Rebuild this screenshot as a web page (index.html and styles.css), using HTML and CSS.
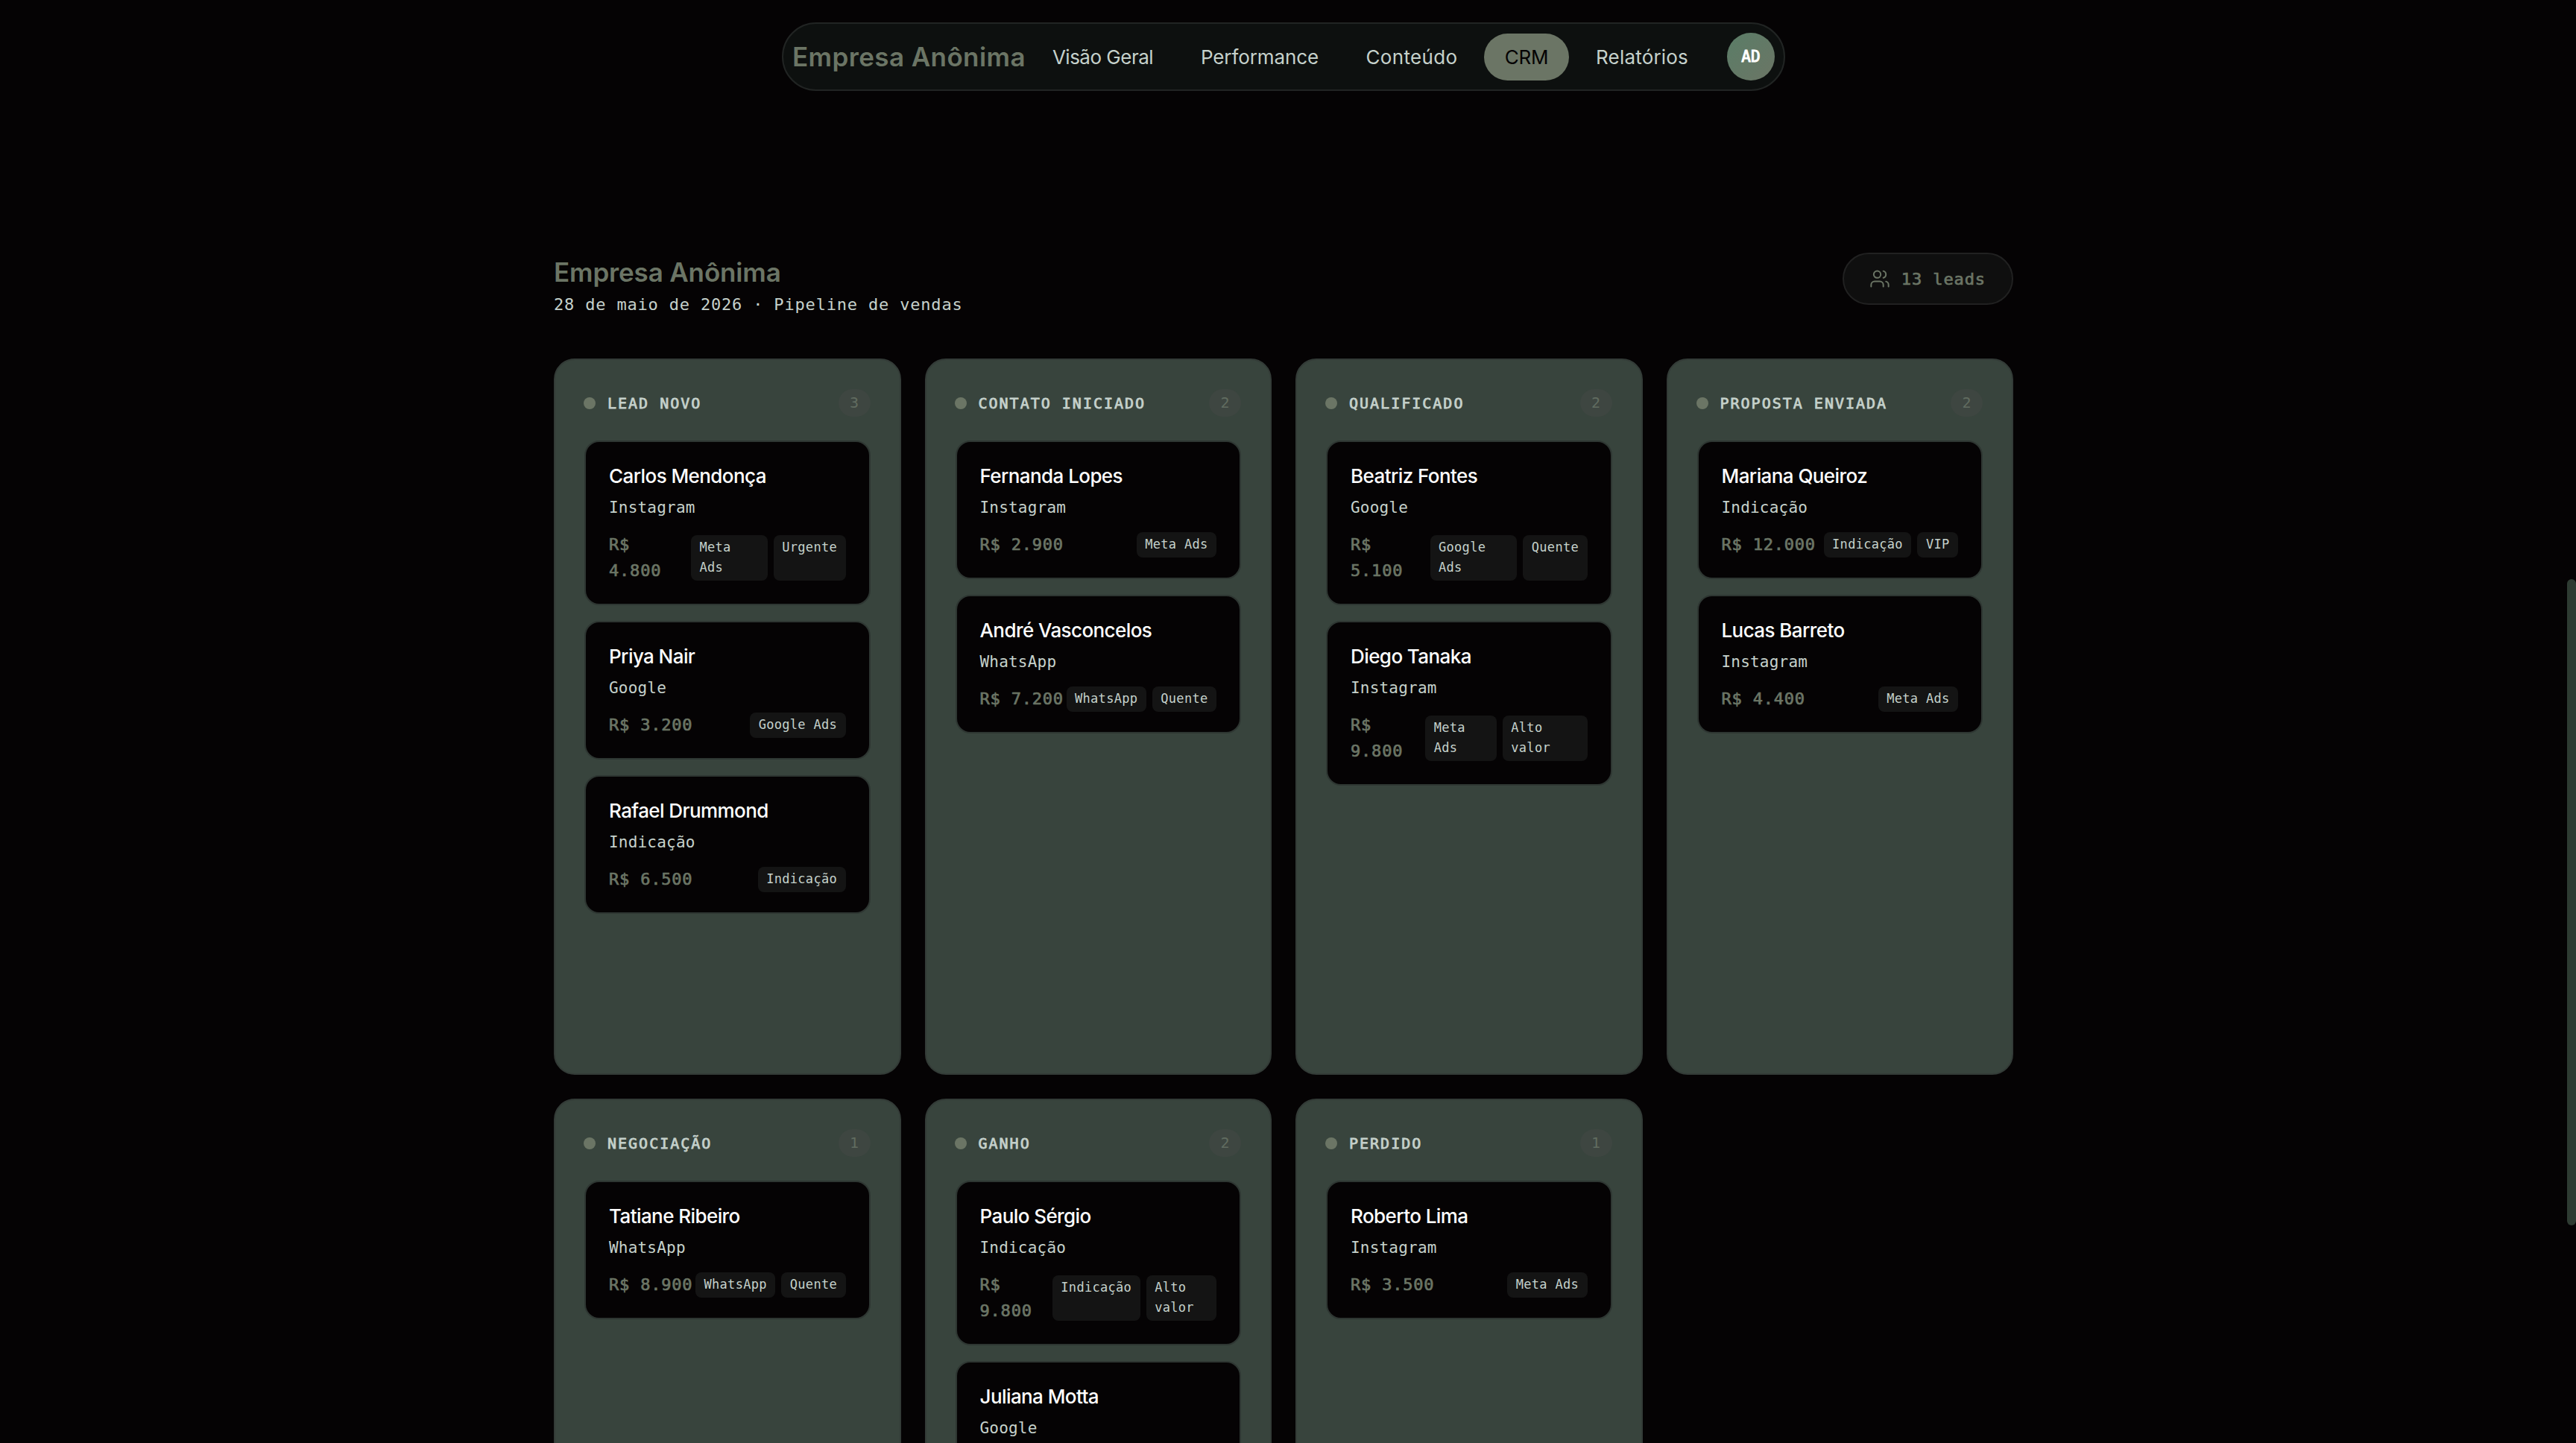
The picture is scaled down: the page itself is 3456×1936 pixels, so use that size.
FILE: index.html
```html
<!DOCTYPE html>
<html lang="pt-BR">
<head>
<meta charset="utf-8">
<title>CRM</title>
<link rel="stylesheet" href="styles.css">
</head>
<body>
<nav class="nav">
  <span class="brand"><span>Empresa Anônima</span></span>
  <a class="link w1">Visão Geral</a>
  <a class="link w2">Performance</a>
  <a class="link w3">Conteúdo</a>
  <a class="link w4 active">CRM</a>
  <a class="link w5">Relatórios</a>
  <span class="avatar">AD</span>
</nav>
<main class="page">
  <header class="head">
    <div>
      <h1 class="title">Empresa Anônima</h1>
      <p class="date">28 de maio de 2026 · Pipeline de vendas</p>
    </div>
    <div class="leads">
      <svg class="icon" viewBox="0 0 24 24" fill="none" stroke="currentColor" stroke-width="1.7" stroke-linecap="round" stroke-linejoin="round"><path d="M16 21v-2a4 4 0 0 0-4-4H6a4 4 0 0 0-4 4v2"/><circle cx="9" cy="7" r="4"/><path d="M22 21v-2a4 4 0 0 0-3-3.87"/><path d="M16 3.13a4 4 0 0 1 0 7.75"/></svg>
      <span>13 leads</span>
    </div>
  </header>
  <section class="board">
    <div class="column">
      <div class="colhead"><i class="dot"></i><h2>LEAD NOVO</h2><span class="count">3</span></div>
      <article class="card"><h3>Carlos Mendonça</h3><p>Instagram</p><div class="foot"><b>R$ 4.800</b><div class="tags"><span>Meta Ads</span><span>Urgente</span></div></div></article>
      <article class="card"><h3>Priya Nair</h3><p>Google</p><div class="foot"><b>R$ 3.200</b><div class="tags"><span>Google Ads</span></div></div></article>
      <article class="card"><h3>Rafael Drummond</h3><p>Indicação</p><div class="foot"><b>R$ 6.500</b><div class="tags"><span>Indicação</span></div></div></article>
    </div>
    <div class="column">
      <div class="colhead"><i class="dot"></i><h2>CONTATO INICIADO</h2><span class="count">2</span></div>
      <article class="card"><h3>Fernanda Lopes</h3><p>Instagram</p><div class="foot"><b>R$ 2.900</b><div class="tags"><span>Meta Ads</span></div></div></article>
      <article class="card"><h3>André Vasconcelos</h3><p>WhatsApp</p><div class="foot"><b>R$ 7.200</b><div class="tags"><span>WhatsApp</span><span>Quente</span></div></div></article>
    </div>
    <div class="column">
      <div class="colhead"><i class="dot"></i><h2>QUALIFICADO</h2><span class="count">2</span></div>
      <article class="card"><h3>Beatriz Fontes</h3><p>Google</p><div class="foot"><b>R$ 5.100</b><div class="tags"><span>Google Ads</span><span>Quente</span></div></div></article>
      <article class="card"><h3>Diego Tanaka</h3><p>Instagram</p><div class="foot"><b>R$ 9.800</b><div class="tags"><span>Meta Ads</span><span>Alto valor</span></div></div></article>
    </div>
    <div class="column">
      <div class="colhead"><i class="dot"></i><h2>PROPOSTA ENVIADA</h2><span class="count">2</span></div>
      <article class="card"><h3>Mariana Queiroz</h3><p>Indicação</p><div class="foot"><b>R$ 12.000</b><div class="tags"><span>Indicação</span><span>VIP</span></div></div></article>
      <article class="card"><h3>Lucas Barreto</h3><p>Instagram</p><div class="foot"><b>R$ 4.400</b><div class="tags"><span>Meta Ads</span></div></div></article>
    </div>
    <div class="column">
      <div class="colhead"><i class="dot"></i><h2>NEGOCIAÇÃO</h2><span class="count">1</span></div>
      <article class="card"><h3>Tatiane Ribeiro</h3><p>WhatsApp</p><div class="foot"><b>R$ 8.900</b><div class="tags"><span>WhatsApp</span><span>Quente</span></div></div></article>
    </div>
    <div class="column">
      <div class="colhead"><i class="dot"></i><h2>GANHO</h2><span class="count">2</span></div>
      <article class="card"><h3>Paulo Sérgio</h3><p>Indicação</p><div class="foot"><b>R$ 9.800</b><div class="tags"><span>Indicação</span><span>Alto valor</span></div></div></article>
      <article class="card"><h3>Juliana Motta</h3><p>Google</p></article>
    </div>
    <div class="column">
      <div class="colhead"><i class="dot"></i><h2>PERDIDO</h2><span class="count">1</span></div>
      <article class="card"><h3>Roberto Lima</h3><p>Instagram</p><div class="foot"><b>R$ 3.500</b><div class="tags"><span>Meta Ads</span></div></div></article>
    </div>
  </section>
</main>
<div class="scrollbar"></div>
</body>
</html>
```
FILE: styles.css
```css
* { box-sizing: border-box; margin: 0; padding: 0; }
html, body { height: 1936px; overflow: hidden; }
body {
  background: #050304;
  color: #c5d1cb;
  font-family: Inter, "Liberation Sans", sans-serif;
  padding: 30px 12px 0 0;
}
.nav {
  display: flex;
  align-items: center;
  gap: 8px;
  width: 1346px;
  height: 92px;
  margin: 0 auto;
  padding: 0 12px 0 12px;
  border: 2px solid #212423;
  border-radius: 46px;
  background: #0d100f;
}
.brand { width: 313px; font-size: 35px; font-weight: 600; letter-spacing: .4px; color: #6b7565; white-space: nowrap; }
.link {
  display: flex;
  align-items: center;
  justify-content: center;
  height: 63px;
  border-radius: 32px;
  font-size: 26px;
  white-space: nowrap;
}
.w1 { width: 191px; letter-spacing: -.5px; }
.w2 { width: 214px; letter-spacing: -.1px; }
.w3 { width: 178px; letter-spacing: .35px; }
.w4 { width: 114px; letter-spacing: -.3px; }
.w5 { width: 180px; letter-spacing: .2px; }
.active { background: #6b7565; color: #050304; }
.avatar {
  display: flex;
  align-items: center;
  justify-content: center;
  width: 64px;
  height: 64px;
  margin-left: auto;
  border-radius: 50%;
  background: linear-gradient(135deg, #5a7d67, #6b7565);
  color: #fff;
  font: 21px "DejaVu Sans Mono", monospace;
  -webkit-text-stroke: 1px currentColor;
}
.page { width: 1958px; margin: 217px auto 0; }
.head { display: flex; justify-content: space-between; height: 142px; }
.title { font-size: 35px; line-height: 52px; font-weight: 600; letter-spacing: -.15px; color: #6b7565; }
.date { font: 22px/36px "DejaVu Sans Mono", monospace; letter-spacing: .82px; }
.leads {
  display: flex;
  align-items: center;
  gap: 15px;
  height: 70px;
  padding: 0 35px 0 34px;
  border: 2px solid #212121;
  border-radius: 35px;
  background: #0f0f0f;
  color: #6b7565;
  font: 22px "DejaVu Sans Mono", monospace;
  letter-spacing: .9px;
  -webkit-text-stroke: .7px currentColor;
}
.icon { width: 28px; height: 28px; -webkit-text-stroke: 0; }
.board { display: grid; grid-template-columns: repeat(4, 1fr); gap: 32px; }
.column {
  display: flex;
  flex-direction: column;
  gap: 21px;
  min-width: 0;
  height: 961px;
  padding: 39px;
  border: 2px solid #333b37;
  border-radius: 28px;
  background: #38443d;
}
.colhead { display: flex; align-items: center; height: 37px; margin-bottom: 11px; }
.dot { width: 16px; height: 16px; margin: 0 16px 0 -1px; border-radius: 50%; background: #6b7565; }
.colhead h2 { font: 20px "DejaVu Sans Mono", monospace; letter-spacing: 2px; -webkit-text-stroke: .8px currentColor; }
.count {
  width: 43px;
  height: 37px;
  margin-left: auto;
  border-radius: 19px;
  background: #3e4641;
  color: #616c60;
  font: 20px/37px "DejaVu Sans Mono", monospace;
  text-align: center;
}
.card {
  padding: 27px 31px;
  border: 2px solid #2e3632;
  border-radius: 20px;
  background: #050304;
}
.card h3 { height: 38px; font-size: 26px; line-height: 38px; font-weight: 500; letter-spacing: -.58px; color: #fff; white-space: nowrap; }
.card p { margin: 7px 0 16px; font: 21px/32px "DejaVu Sans Mono", monospace; letter-spacing: .2px; }
.foot { display: flex; align-items: center; justify-content: space-between; }
.foot b { font: 22px/35px "DejaVu Sans Mono", monospace; letter-spacing: .8px; color: #6b7565; -webkit-text-stroke: .7px currentColor; }
.tags { display: flex; gap: 8px; }
.tags span {
  padding: 3.5px 11.5px;
  border-radius: 8px;
  background: #141414;
  font: 17px/27px "DejaVu Sans Mono", monospace;
  letter-spacing: .3px;
}
.scrollbar { position: absolute; right: 0; top: 777px; width: 12px; height: 867px; border-radius: 6px; background: #2e3b32; }
```
